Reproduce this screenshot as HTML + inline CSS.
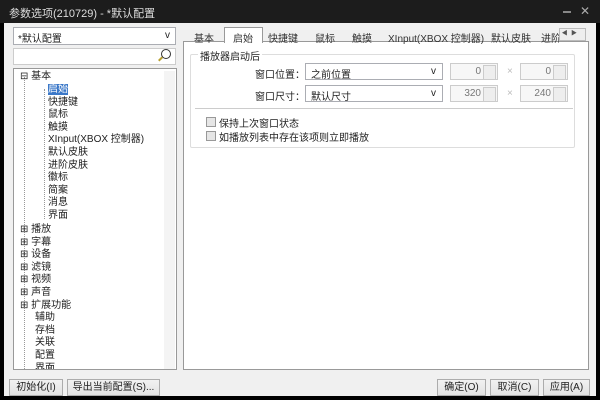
<!DOCTYPE html><html><head><meta charset="utf-8"><style>
*{margin:0;padding:0;box-sizing:border-box}
body{width:600px;height:400px;background:#000;font-family:"Liberation Sans","Noto Sans CJK SC",sans-serif;font-size:10px;color:#222;position:relative;overflow:hidden}
.a{position:absolute}
.t{white-space:nowrap}
.box{background:#fff;border:1px solid #abadb3}
.btn{background:linear-gradient(#f2f2f2,#e2e2e2);border:1px solid #acacac;text-align:center;line-height:15px}
.cb{width:10px;height:10px;border:1px solid #999;background:#e6e6e6}
.spin{background:#f7f7f7;border:1px solid #ccc;text-align:right;padding-right:16px;line-height:15px;color:#777}
.spin:after{content:"";position:absolute;right:1px;top:1px;width:11px;height:13px;border:1px solid #ccc;background:#eee}
.tab{position:absolute;top:30px;color:#333;white-space:nowrap}
</style></head><body>
<div class="a" style="left:0;top:0;width:600px;height:23px;background:#1c1c1c"></div>
<div class="a t" style="left:9px;top:5px;color:#ddd;font-size:11px">参数选项(210729) - *默认配置</div>
<div class="a t" style="left:580px;top:4px;color:#aaa;font-size:12px">✕</div>
<div class="a" style="left:563px;top:11px;width:8px;height:2px;background:#888"></div>
<div class="a" style="left:4px;top:23px;width:592px;height:373px;background:#f0f0f0"></div>
<div class="a box t" style="left:13px;top:27px;width:163px;height:18px;padding:2px 4px">*默认配置<span style="position:absolute;right:5px;top:2px">v</span></div>
<div class="a box" style="left:13px;top:48px;width:163px;height:17px;border-color:#ccc"></div>
<div class="a" style="left:161px;top:49px;width:10px;height:10px;border:1.5px solid #333;border-radius:50%"></div>
<div class="a" style="left:158px;top:58px;width:5px;height:2px;background:#b8a030;transform:rotate(-45deg)"></div>
<div class="a box" style="left:13px;top:68px;width:164px;height:302px;border-color:#999;overflow:hidden">
<div class="a" style="left:10px;top:8px;height:300px;border-left:1px dotted #999"></div>
<div class="a" style="left:30px;top:20px;height:130px;border-left:1px dotted #999"></div>
<div class="a" style="left:150px;top:2px;width:11px;height:298px;background:#f4f4f4"></div>
<div class="a t" style="left:6px;top:2px;line-height:12.6px">⊟ 基本</div>
<div class="a t" style="left:34px;top:15px;line-height:12.6px"><span style="background:#3b78c8;color:#fff">启始</span><br>快捷键<br>鼠标<br>触摸<br>XInput(XBOX 控制器)<br>默认皮肤<br>进阶皮肤<br>徽标<br>简案<br>消息<br>界面</div>
<div class="a t" style="left:6px;top:155px;line-height:12.6px">⊞ 播放<br>⊞ 字幕<br>⊞ 设备<br>⊞ 滤镜<br>⊞ 视频<br>⊞ 声音<br>⊞ 扩展功能<br><span style="padding-left:15px">辅助</span><br><span style="padding-left:15px">存档</span><br><span style="padding-left:15px">关联</span><br><span style="padding-left:15px">配置</span><br><span style="padding-left:15px">界面</span></div>
</div>
<div class="a" style="left:183px;top:41px;width:406px;height:329px;background:#fff;border:1px solid #999"></div>
<div class="a" style="left:224px;top:27px;width:39px;height:16px;background:#fff;border:1px solid #999;border-bottom:none"></div>
<div class="tab" style="left:194px">基本</div>
<div class="tab" style="left:233px">启始</div>
<div class="tab" style="left:268px">快捷键</div>
<div class="tab" style="left:315px">鼠标</div>
<div class="tab" style="left:352px">触摸</div>
<div class="tab" style="left:388px">XInput(XBOX 控制器)</div>
<div class="tab" style="left:491px">默认皮肤</div>
<div class="tab" style="left:541px;width:18px;overflow:hidden">进阶</div>
<div class="a" style="left:559px;top:28px;width:27px;height:13px;background:#eee;border:1px solid #bbb;font-size:6px;line-height:11px;color:#555">&nbsp;◀&nbsp;&nbsp;▶</div>
<div class="a" style="left:190px;top:54px;width:385px;height:94px;border:1px solid #ddd;border-radius:2px"></div>
<div class="a t" style="left:198px;top:48px;background:#fff;padding:0 2px">播放器启动后</div>
<div class="a" style="left:195px;top:108px;width:378px;border-top:1px solid #ccc"></div>
<div class="a t" style="left:255px;top:66px">窗口位置：</div>
<div class="a t" style="left:255px;top:88px">窗口尺寸：</div>
<div class="a box t" style="left:305px;top:63px;width:138px;height:17px;padding:2px 5px">之前位置<span style="position:absolute;right:6px;top:2px">v</span></div>
<div class="a box t" style="left:305px;top:85px;width:138px;height:17px;padding:2px 5px">默认尺寸<span style="position:absolute;right:6px;top:2px">v</span></div>
<div class="a spin" style="left:450px;top:63px;width:48px;height:17px">0</div>
<div class="a spin" style="left:520px;top:63px;width:48px;height:17px">0</div>
<div class="a spin" style="left:450px;top:85px;width:48px;height:17px">320</div>
<div class="a spin" style="left:520px;top:85px;width:48px;height:17px">240</div>
<div class="a t" style="left:507px;top:66px;color:#bbb">×</div>
<div class="a t" style="left:507px;top:88px;color:#bbb">×</div>
<div class="a cb" style="left:206px;top:117px"></div>
<div class="a cb" style="left:206px;top:131px"></div>
<div class="a t" style="left:219px;top:115px">保持上次窗口状态</div>
<div class="a t" style="left:219px;top:129px">如播放列表中存在该项则立即播放</div>
<div class="a btn t" style="left:9px;top:379px;width:54px;height:17px">初始化(I)</div>
<div class="a btn t" style="left:67px;top:379px;width:93px;height:17px">导出当前配置(S)...</div>
<div class="a btn t" style="left:437px;top:379px;width:49px;height:17px">确定(O)</div>
<div class="a btn t" style="left:490px;top:379px;width:49px;height:17px">取消(C)</div>
<div class="a btn t" style="left:543px;top:379px;width:47px;height:17px">应用(A)</div>
</body></html>
